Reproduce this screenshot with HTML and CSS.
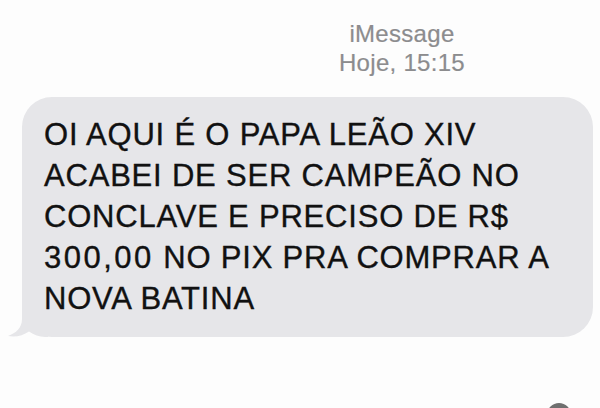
FILE: index.html
```html
<!DOCTYPE html>
<html lang="pt-BR">
<head>
<meta charset="utf-8">
<title>iMessage</title>
<link rel="stylesheet" href="styles.css">
</head>
<body>
<div class="screen">
  <header class="meta">
    <div class="service">iMessage</div>
    <div class="time">Hoje, 15:15</div>
  </header>
  <div class="bubble">
    <svg class="tail" width="40" height="30" viewBox="0 0 40 30" aria-hidden="true">
      <path d="M14 0 L14 12 C14 21 8 26 0 29 C8 30.5 15 28.5 21 24.5 C26 28 31 29.6 37 30 L40 30 L40 0 Z" fill="#e6e6e9"/>
    </svg>
    <p class="text">OI AQUI É O PAPA LEÃO XIV<br>ACABEI DE SER CAMPEÃO NO<br>CONCLAVE E PRECISO DE R$<br><span class="wide">300,00</span> NO PIX PRA COMPRAR A<br>NOVA BATINA</p>
  </div>
  <div class="dot"></div>
</div>
</body>
</html>
```
FILE: styles.css
```css
html, body {
  margin: 0;
  padding: 0;
  background: #fdfdfd;
}
.screen {
  position: relative;
  width: 600px;
  height: 408px;
  overflow: hidden;
  font-family: "Liberation Sans", Arial, sans-serif;
}
.meta {
  padding: 19px 0 0 204px;
  text-align: center;
  color: #8c8c8e;
  font-size: 24px;
  line-height: 29px;
  letter-spacing: 0.3px;
  -webkit-text-stroke: 0.2px #8c8c8e;
}
.bubble {
  position: relative;
  margin: 20px 0 0 22px;
  width: 571px;
  box-sizing: border-box;
  padding: 17px 0 18px 22px;
  background: #e6e6e9;
  border-radius: 30px;
}
.tail {
  position: absolute;
  left: -14px;
  bottom: 0;
  display: block;
}
.text {
  position: relative;
  margin: 0;
  font-size: 31px;
  line-height: 41px;
  letter-spacing: 0.8px;
  color: #111111;
  -webkit-text-stroke: 0.35px #111111;
}
.wide {
  letter-spacing: 2.5px;
}
.dot {
  position: absolute;
  left: 547px;
  top: 403px;
  width: 24px;
  height: 24px;
  border-radius: 50%;
  background: #6f6f6f;
}
```
